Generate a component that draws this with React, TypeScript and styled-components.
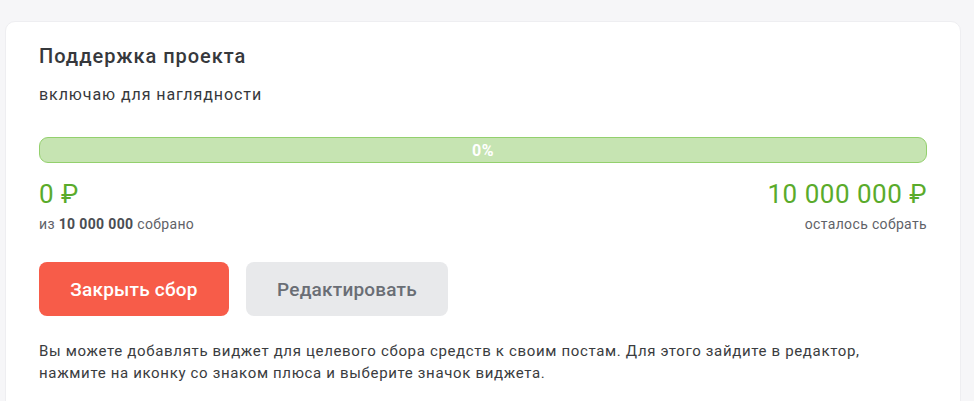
import React from "react";
import styled, { createGlobalStyle } from "styled-components";

const Global = createGlobalStyle`
  html, body { margin: 0; padding: 0; }
  body {
    background: #f6f6f8;
    font-family: Roboto, "Noto Sans", Arial, sans-serif;
    color: #333;
  }
`;

const Page = styled.div`
  padding: 21px 13px 0 5px;
`;

const Card = styled.section`
  background: #fff;
  border: 1px solid #eeeef1;
  border-radius: 10px;
  padding: 20px 33px 30px 33px;
`;

const Title = styled.h2`
  margin: 0;
  font-size: 20px;
  font-weight: 500;
  line-height: 28px;
  letter-spacing: 0.95px;
  color: #36383c;
`;

const Subtitle = styled.p`
  margin: 14px 0 0;
  font-size: 16px;
  line-height: 22px;
  letter-spacing: 0.92px;
  color: #36383c;
`;

const Bar = styled.div`
  margin-top: 31px;
  height: 26px;
  box-sizing: border-box;
  border: 1px solid #93d06d;
  background: #c6e4b2;
  border-radius: 9px;
  display: flex;
  align-items: center;
  justify-content: center;
  position: relative;
  overflow: hidden;
`;

const Fill = styled.div`
  position: absolute;
  left: 0;
  top: 0;
  bottom: 0;
  background: #7cc24f;
`;

const BarLabel = styled.span`
  position: relative;
  color: #fff;
  font-weight: 700;
  font-size: 16px;
  letter-spacing: 0.4px;
`;

const Stats = styled.div`
  margin-top: 15px;
  display: flex;
  justify-content: space-between;
`;

const Stat = styled.div<{ $align: "left" | "right" }>`
  display: flex;
  flex-direction: column;
  align-items: ${(p) => (p.$align === "left" ? "flex-start" : "flex-end")};
`;

const Amount = styled.div`
  font-size: 26px;
  line-height: 32px;
  letter-spacing: 0.5px;
  color: #5aab2b;
`;

const Caption = styled.div`
  margin-top: 5px;
  font-size: 14px;
  line-height: 18px;
  letter-spacing: 0.35px;
  color: #5f6268;
  b { font-weight: 700; color: #4a4d52; }
`;

const Actions = styled.div`
  margin-top: 29px;
  display: flex;
  gap: 17px;
`;

const Button = styled.button<{ $variant: "danger" | "neutral" }>`
  height: 54px;
  border: none;
  border-radius: 8px;
  font-family: inherit;
  font-size: 19px;
  font-weight: 500;
  letter-spacing: 0.2px;
  cursor: pointer;
  padding: 0;
  width: ${(p) => (p.$variant === "danger" ? "190px" : "202px")};
  background: ${(p) => (p.$variant === "danger" ? "#f75c49" : "#e8e9eb")};
  color: ${(p) => (p.$variant === "danger" ? "#fff" : "#6a6e75")};
`;

const Note = styled.p`
  margin: 24px 0 0;
  font-size: 15px;
  line-height: 22px;
  letter-spacing: 0.66px;
  color: #3a3c40;
`;

export default function App() {
  const collected = 0;
  const goal = 10000000;
  const pct = Math.round((collected / goal) * 100);
  return (
    <>
      <Global />
      <Page>
        <Card>
          <Title>Поддержка проекта</Title>
          <Subtitle>включаю для наглядности</Subtitle>
          <Bar>
            <Fill style={{ width: `${pct}%` }} />
            <BarLabel>{pct}%</BarLabel>
          </Bar>
          <Stats>
            <Stat $align="left">
              <Amount>0 ₽</Amount>
              <Caption>
                из <b>10 000 000</b> собрано
              </Caption>
            </Stat>
            <Stat $align="right">
              <Amount>10 000 000 ₽</Amount>
              <Caption>осталось собрать</Caption>
            </Stat>
          </Stats>
          <Actions>
            <Button $variant="danger">Закрыть сбор</Button>
            <Button $variant="neutral">Редактировать</Button>
          </Actions>
          <Note>
            Вы можете добавлять виджет для целевого сбора средств к своим постам. Для этого зайдите в редактор,
            <br />
            нажмите на иконку со знаком плюса и выберите значок виджета.
          </Note>
        </Card>
      </Page>
    </>
  );
}
